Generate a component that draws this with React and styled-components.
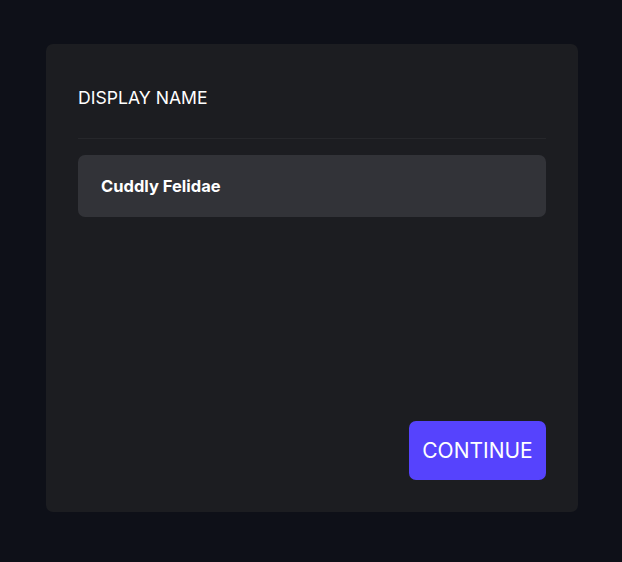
import React from "react";
import styled, { createGlobalStyle } from "styled-components";

const Global = createGlobalStyle`
  html, body { margin: 0; padding: 0; background: #0e1018; }
  body { font-family: "Inter", sans-serif; }
`;

const Page = styled.div`
  width: 622px;
  height: 562px;
  box-sizing: border-box;
  padding: 44px 44px 50px 46px;
  display: flex;
`;

const Card = styled.div`
  flex: 1;
  background: #1c1d21;
  border-radius: 7px;
  padding: 32px;
  display: flex;
  flex-direction: column;
`;

const Header = styled.div`
  padding: 11px 0 29px;
  border-bottom: 1px solid #26272b;
  color: #ffffff;
  font-family: "Inter", sans-serif;
  font-size: 17.6px;
  line-height: 22px;
  font-weight: 400;
`;

const Field = styled.div`
  margin-top: 16px;
  height: 62px;
  box-sizing: border-box;
  background: #323338;
  border-radius: 7px;
  padding: 0 23px;
  display: flex;
  align-items: center;
  color: #fff;
  font-family: "Inter", sans-serif;
  font-weight: 700;
  font-size: 16.5px;
`;

const Footer = styled.div`
  margin-top: auto;
  display: flex;
  justify-content: flex-end;
`;

const Button = styled.button`
  height: 59px;
  width: 137px;
  border: none;
  border-radius: 7px;
  background: #5643fd;
  color: #fff;
  font-family: "Inter", sans-serif;
  font-size: 21px;
  font-weight: 400;
  padding: 0;
  cursor: pointer;
`;

export default function App() {
  return (
    <>
      <Global />
      <Page>
        <Card>
          <Header>DISPLAY NAME</Header>
          <Field>Cuddly Felidae</Field>
          <Footer>
            <Button>CONTINUE</Button>
          </Footer>
        </Card>
      </Page>
    </>
  );
}
